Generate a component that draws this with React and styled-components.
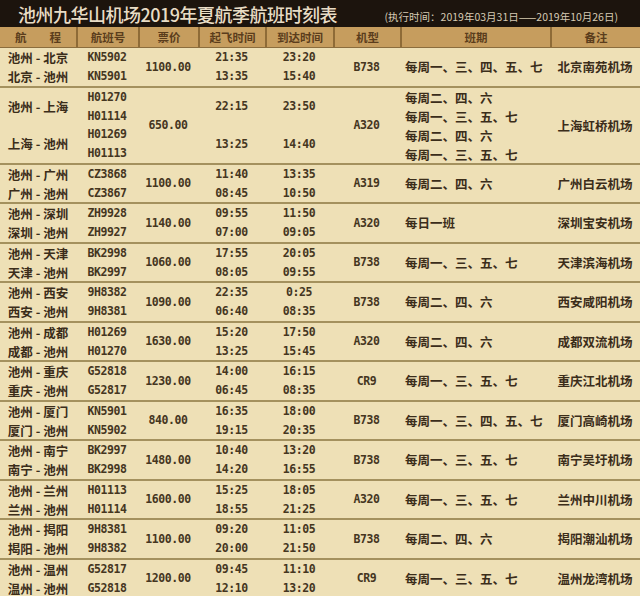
import React from "react";
import styled, { createGlobalStyle } from "styled-components";

const GlobalStyle = createGlobalStyle`
  html, body { margin: 0; padding: 0; background: #eee0b6; }
  body { width: 640px; height: 596px; overflow: hidden; }
`;

const COLS = "76px 62px 60px 67px 68px 67px 150px 90px";
const LINE = 18.75;

const Page = styled.div`
  width: 640px;
  height: 596px;
  overflow: hidden;
  display: flex;
  flex-direction: column;
  background: #eee0b6;
  font-family: "Noto Sans CJK SC", "Noto Sans", sans-serif;
`;

const TitleBar = styled.div`
  height: 27px;
  flex: 0 0 27px;
  display: flex;
  align-items: center;
  padding: 0 22px 0 18px;
  background: #1c140d;
`;

const Title = styled.h1`
  margin: 0;
  font-size: 18px;
  font-weight: 500;
  color: #e8dcc5;
  letter-spacing: -0.5px;
  line-height: 1;
`;

const Sub = styled.span`
  margin-left: auto;
  padding-top: 5px;
  font-size: 10.5px;
  color: #d6cab3;
  white-space: nowrap;
`;

const Header = styled.div`
  display: grid;
  grid-template-columns: ${COLS};
  height: 21px;
  flex: 0 0 21px;
  background: #c69d5e;
  border-bottom: 1px solid #8b6d3d;
  box-sizing: border-box;
`;

const HeadCell = styled.div`
  display: flex;
  align-items: center;
  justify-content: center;
  font-size: 11.5px;
  font-weight: 700;
  color: #5b3d1c;
  & + & { border-left: 2px solid #8e6b37; }
`;

const Row = styled.div`
  display: grid;
  grid-template-columns: ${COLS};
  flex: 0 0 auto;
  & + & { border-top: 2px solid #a4915e; }
`;

const Col = styled.div`
  display: flex;
  flex-direction: column;
  height: ${(p) => p.$lines * LINE}px;
`;

const Item = styled.div`
  flex: 1 1 0;
  display: flex;
  align-items: center;
  justify-content: ${(p) => (p.$left ? "flex-start" : "center")};
  padding-left: ${(p) => (p.$left ? "5px" : "0")};
  white-space: nowrap;
  color: ${(p) => (p.$mono ? "#45361f" : "#3b2d1a")};
  font-family: ${(p) =>
    p.$mono
      ? '"DejaVu Sans Mono", "Liberation Mono", monospace'
      : '"Noto Sans CJK SC", "Noto Sans", sans-serif'};
  font-size: ${(p) => (p.$mono ? "11.5px" : "12.5px")};
  letter-spacing: ${(p) => (p.$mono ? "-0.4px" : "0")};
  font-weight: 700;
`;

const rows = [
  { lines: 2, routes: ["池州 - 北京", "北京 - 池州"], flights: ["KN5902", "KN5901"], price: "1100.00", dep: ["21:35", "13:35"], arr: ["23:20", "15:40"], type: "B738", sched: ["每周一、三、四、五、七"], note: "北京南苑机场" },
  { lines: 4, routes: ["池州 - 上海", "上海 - 池州"], flights: ["H01270", "H01114", "H01269", "H01113"], price: "650.00", dep: ["22:15", "13:25"], arr: ["23:50", "14:40"], type: "A320", sched: ["每周二、四、六", "每周一、三、五、七", "每周二、四、六", "每周一、三、五、七"], note: "上海虹桥机场" },
  { lines: 2, routes: ["池州 - 广州", "广州 - 池州"], flights: ["CZ3868", "CZ3867"], price: "1100.00", dep: ["11:40", "08:45"], arr: ["13:35", "10:50"], type: "A319", sched: ["每周二、四、六"], note: "广州白云机场" },
  { lines: 2, routes: ["池州 - 深圳", "深圳 - 池州"], flights: ["ZH9928", "ZH9927"], price: "1140.00", dep: ["09:55", "07:00"], arr: ["11:50", "09:05"], type: "A320", sched: ["每日一班"], note: "深圳宝安机场" },
  { lines: 2, routes: ["池州 - 天津", "天津 - 池州"], flights: ["BK2998", "BK2997"], price: "1060.00", dep: ["17:55", "08:05"], arr: ["20:05", "09:55"], type: "B738", sched: ["每周一、三、五、七"], note: "天津滨海机场" },
  { lines: 2, routes: ["池州 - 西安", "西安 - 池州"], flights: ["9H8382", "9H8381"], price: "1090.00", dep: ["22:35", "06:40"], arr: ["0:25", "08:35"], type: "B738", sched: ["每周二、四、六"], note: "西安咸阳机场" },
  { lines: 2, routes: ["池州 - 成都", "成都 - 池州"], flights: ["H01269", "H01270"], price: "1630.00", dep: ["15:20", "13:25"], arr: ["17:50", "15:45"], type: "A320", sched: ["每周二、四、六"], note: "成都双流机场" },
  { lines: 2, routes: ["池州 - 重庆", "重庆 - 池州"], flights: ["G52818", "G52817"], price: "1230.00", dep: ["14:00", "06:45"], arr: ["16:15", "08:35"], type: "CR9", sched: ["每周一、三、五、七"], note: "重庆江北机场" },
  { lines: 2, routes: ["池州 - 厦门", "厦门 - 池州"], flights: ["KN5901", "KN5902"], price: "840.00", dep: ["16:35", "19:15"], arr: ["18:00", "20:35"], type: "B738", sched: ["每周一、三、四、五、七"], note: "厦门高崎机场" },
  { lines: 2, routes: ["池州 - 南宁", "南宁 - 池州"], flights: ["BK2997", "BK2998"], price: "1480.00", dep: ["10:40", "14:20"], arr: ["13:20", "16:55"], type: "B738", sched: ["每周一、三、五、七"], note: "南宁吴圩机场" },
  { lines: 2, routes: ["池州 - 兰州", "兰州 - 池州"], flights: ["H01113", "H01114"], price: "1600.00", dep: ["15:25", "18:55"], arr: ["18:05", "21:25"], type: "A320", sched: ["每周一、三、五、七"], note: "兰州中川机场" },
  { lines: 2, routes: ["池州 - 揭阳", "揭阳 - 池州"], flights: ["9H8381", "9H8382"], price: "1100.00", dep: ["09:20", "20:00"], arr: ["11:05", "21:50"], type: "B738", sched: ["每周二、四、六"], note: "揭阳潮汕机场" },
  { lines: 2, routes: ["池州 - 温州", "温州 - 池州"], flights: ["G52817", "G52818"], price: "1200.00", dep: ["09:45", "12:10"], arr: ["11:10", "13:20"], type: "CR9", sched: ["每周一、三、五、七"], note: "温州龙湾机场" },
];

const Cells = ({ lines, items, mono, left }) => (
  <Col $lines={lines}>
    {items.map((t, i) => (
      <Item key={i} $mono={mono} $left={left}>
        {t}
      </Item>
    ))}
  </Col>
);

const heads = ["航　　程", "航班号", "票价", "起飞时间", "到达时间", "机型", "班期", "备注"];

export default function App() {
  return (
    <Page>
      <GlobalStyle />
      <TitleBar>
        <Title>池州九华山机场2019年夏航季航班时刻表</Title>
        <Sub>(执行时间：2019年03月31日——2019年10月26日)</Sub>
      </TitleBar>
      <Header>
        {heads.map((h) => (
          <HeadCell key={h}>{h}</HeadCell>
        ))}
      </Header>
      {rows.map((r, i) => (
        <Row key={i}>
          <Cells lines={r.lines} items={r.routes} />
          <Cells lines={r.lines} items={r.flights} mono />
          <Cells lines={r.lines} items={[r.price]} mono />
          <Cells lines={r.lines} items={r.dep} mono />
          <Cells lines={r.lines} items={r.arr} mono />
          <Cells lines={r.lines} items={[r.type]} mono />
          <Cells lines={r.lines} items={r.sched} left />
          <Cells lines={r.lines} items={[r.note]} />
        </Row>
      ))}
    </Page>
  );
}
